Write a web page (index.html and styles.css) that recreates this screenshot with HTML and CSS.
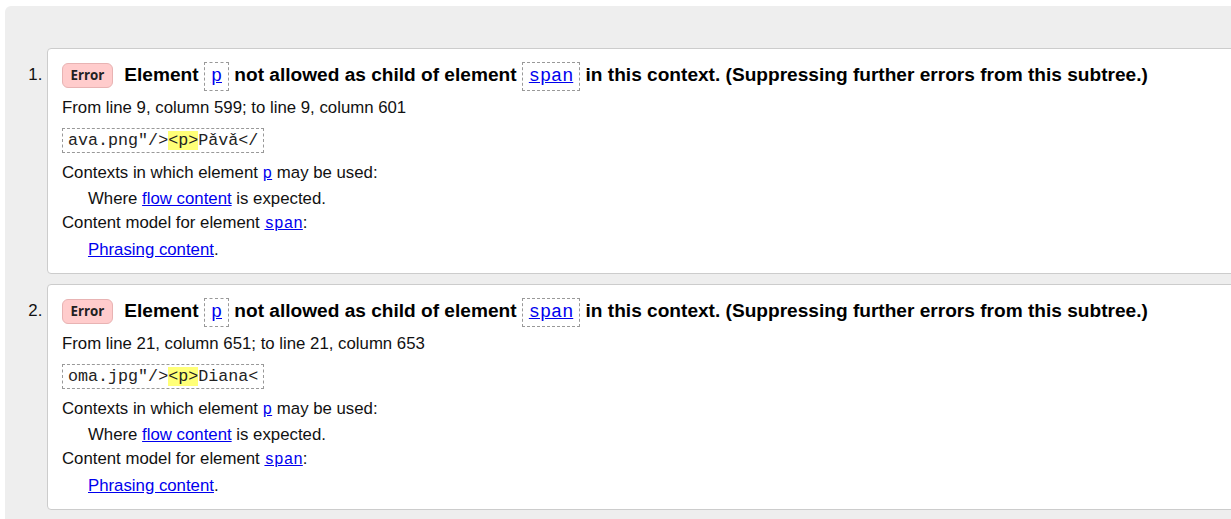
FILE: index.html
```html
<!DOCTYPE html>
<html>
<head>
<meta charset="utf-8">
<link rel="stylesheet" href="styles.css">
</head>
<body>
<div class="page">
  <ol class="results">
    <li class="card">
      <p class="title"><span class="badge">Error</span><span class="msg">Element <code class="tag"><a href="#">p</a></code> not allowed as child of element <code class="tag"><a href="#">span</a></code> in this context. (Suppressing further errors from this subtree.)</span></p>
      <p class="loc">From line 9, column 599; to line 9, column 601</p>
      <p class="extract"><code>ava.png"/&gt;<b class="hl">&lt;p&gt;</b>Pǎvǎ&lt;/</code></p>
      <dl class="details">
        <dt>Contexts in which element <a class="mono" href="#">p</a> may be used:</dt>
        <dd class="d1">Where <a href="#">flow content</a> is expected.</dd>
        <dt>Content model for element <a class="mono" href="#">span</a>:</dt>
        <dd class="d2"><a href="#">Phrasing content</a>.</dd>
      </dl>
    </li>
    <li class="card">
      <p class="title"><span class="badge">Error</span><span class="msg">Element <code class="tag"><a href="#">p</a></code> not allowed as child of element <code class="tag"><a href="#">span</a></code> in this context. (Suppressing further errors from this subtree.)</span></p>
      <p class="loc">From line 21, column 651; to line 21, column 653</p>
      <p class="extract"><code>oma.jpg"/&gt;<b class="hl">&lt;p&gt;</b>Diana&lt;</code></p>
      <dl class="details">
        <dt>Contexts in which element <a class="mono" href="#">p</a> may be used:</dt>
        <dd class="d1">Where <a href="#">flow content</a> is expected.</dd>
        <dt>Content model for element <a class="mono" href="#">span</a>:</dt>
        <dd class="d2"><a href="#">Phrasing content</a>.</dd>
      </dl>
    </li>
  </ol>
</div>
</body>
</html>
```
FILE: styles.css
```css
html, body {
  margin: 0;
  padding: 0;
  background: #fff;
  overflow: hidden;
}
body {
  font-family: "Liberation Sans", Arial, sans-serif;
  font-size: 16.8px;
  color: #111;
}
.page {
  margin: 6px 0 0 5px;
  background: #eeeeee;
  border-top-left-radius: 6px;
  padding: 42px 0 10px 0;
}
.results {
  margin: 0;
  padding: 0 0 0 42px;
  list-style: decimal outside;
}
.card {
  background: #fff;
  border: 1px solid #cccccc;
  border-radius: 4px;
  margin: 0 -20px 10px 0;
  padding: 14px 14px 11px 14px;
}
.card:last-child {
  margin-bottom: 0;
}
.card::marker {
  font-family: "Liberation Sans", Arial, sans-serif;
  font-size: 16.8px;
  color: #111;
}
.title {
  margin: 0;
  display: flex;
  align-items: center;
  height: 25px;
}
.badge {
  font-family: "Open Sans", sans-serif;
  font-weight: 700;
  font-size: 13.3px;
  color: #222;
  background: #ffcccc;
  border: 1px solid #e8b3b3;
  border-radius: 6px;
  height: 23px;
  line-height: 23px;
  padding: 0 7.5px;
  margin-right: 11.5px;
  white-space: nowrap;
}
.msg {
  font-weight: 700;
  font-size: 19.1px;
  color: #000;
  white-space: nowrap;
}
.tag {
  font-family: "Liberation Mono", "Courier New", monospace;
  font-weight: 400;
  font-size: 18.5px;
  border: 1px dashed #999;
  padding: 3px 6px 3px 6px;
}
a {
  color: #0000ee;
  text-decoration: underline;
}
.loc {
  margin: 10px 0 0 0;
  line-height: 20px;
}
.extract {
  margin: 10px 0 0 0;
}
.extract code {
  display: inline-block;
  font-family: "Liberation Mono", "Courier New", monospace;
  font-size: 16.7px;
  line-height: 19px;
  color: #222;
  border: 1px dashed #999;
  padding: 2px 5px;
}
.hl {
  font-weight: 400;
  background: #ffff77;
}
.details {
  margin: 8px 0 0 0;
}
.details dt, .details dd {
  line-height: 24px;
}
.details dd {
  margin-left: 26px;
}
.d1 {
  margin-top: 1px;
}
.d2 {
  margin-top: 2px;
}
.mono {
  font-family: "Liberation Mono", "Courier New", monospace;
  font-size: 16px;
}
```
